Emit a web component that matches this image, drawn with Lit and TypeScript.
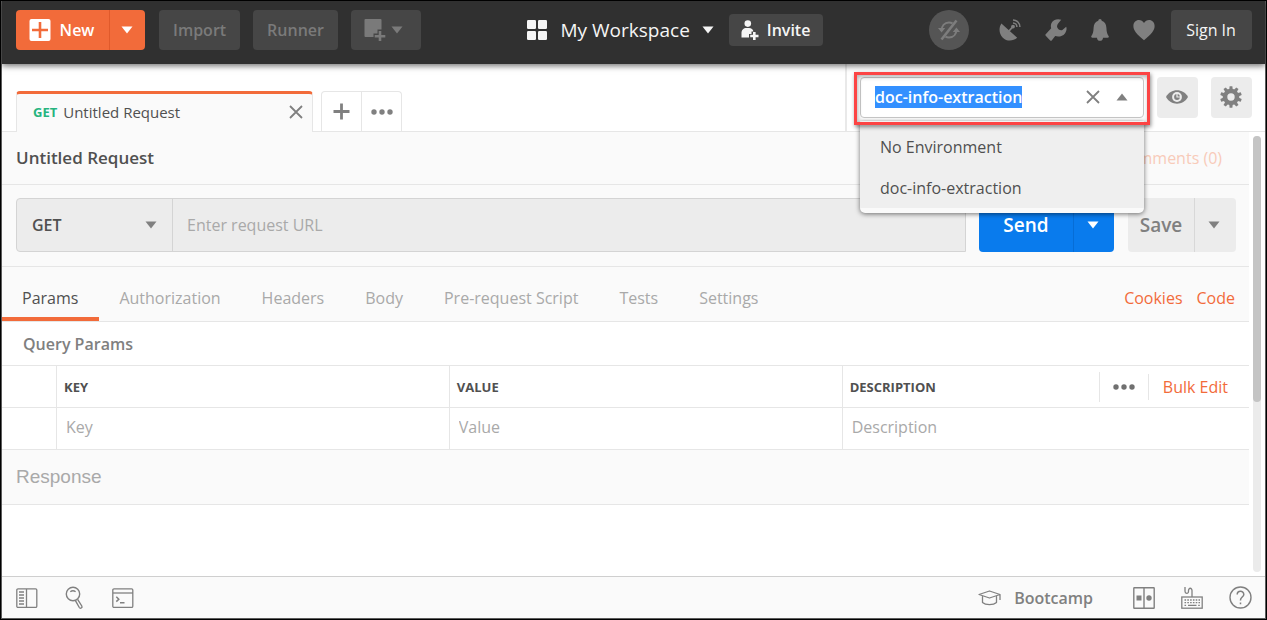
import { LitElement, html, css, svg } from "lit";
import { customElement, property, query, state } from "lit/decorators.js";
import { classMap } from "lit/directives/class-map.js";

const caret = (direction: "down" | "up" = "down") => html`
  <svg class="caret" width="12" height="8" viewBox="0 0 12 8" aria-hidden="true">
    <path d=${direction === "down" ? "M0.5 0.5h11L6 7.5z" : "M0.5 7.5h11L6 0.5z"} fill="currentColor" />
  </svg>
`;

const dots = html`
  <svg width="22" height="6" viewBox="0 0 22 6" aria-hidden="true" fill="currentColor">
    <circle cx="3" cy="3" r="2.7" /><circle cx="11" cy="3" r="2.7" /><circle cx="19" cy="3" r="2.7" />
  </svg>
`;

const cross = html`
  <svg width="14" height="14" viewBox="0 0 14 14" aria-hidden="true">
    <path d="M1 1l12 12M13 1L1 13" stroke="currentColor" stroke-width="1.8" fill="none" />
  </svg>
`;

const gearTeeth = [0, 36, 72, 108, 144, 180, 216, 252, 288, 324].map(
  (angle) => svg`<path d="M9.2 4.4L9.6 0.2h2.8l.4 4.2z" transform="rotate(${angle} 11 11)" />`
);

const icons = {
  newItem: html`
    <svg width="22" height="22" viewBox="0 0 22 22" aria-hidden="true">
      <rect x="0.5" width="21" height="22" rx="2" fill="#fff" />
      <path d="M11 3v16M3 11h16" stroke="#f26b3a" stroke-width="2.6" />
    </svg>
  `,
  newWindow: html`
    <svg width="22" height="22" viewBox="0 0 22 22" aria-hidden="true" fill="currentColor">
      <path d="M1.5 0h15a1 1 0 0 1 1 1v9.500h-4v4H9.500V18H1.500a1 1 0 0 1-1-1V1a1 1 0 0 1 1-1z" />
      <path d="M14.700 12h2.600v4h4v2.600h-4v3.400h-2.600v-3.400h-4V16h4z" />
    </svg>
  `,
  workspace: html`
    <svg width="20" height="20" viewBox="0 0 20 20" aria-hidden="true" fill="currentColor">
      <rect width="9" height="9" rx="1.2" /><rect x="11" width="9" height="9" rx="1.2" />
      <rect y="11" width="9" height="9" rx="1.2" /><rect x="11" y="11" width="9" height="9" rx="1.2" />
    </svg>
  `,
  invite: html`
    <svg width="18" height="20" viewBox="0 0 18 20" aria-hidden="true" fill="currentColor">
      <circle cx="6.800" cy="3.600" r="3.300" />
      <path d="M0.500 17.500v-4.500c0-3 2-5 5-5h2.500c2.500 0 4 1.300 4.400 3.500H10.500v2.500H8v3.500z" />
      <path d="M12 12h2.600v2.700h2.900v2.600h-2.900V20H12v-2.700H9.200v-2.600H12z" />
    </svg>
  `,
  sync: html`
    <svg width="24" height="24" viewBox="0 0 24 24" aria-hidden="true" fill="none" stroke="currentColor" stroke-width="2">
      <path d="M4.500 13c0-5 3-8.500 7.500-8.500 1.500 0 2.500.3 3.500.9M19.500 11c0 5-3 8.500-7.500 8.500-1.500 0-2.500-.3-3.500-.9" />
      <path d="M1 10h7.200l-3.600 4.600zM15.800 14H23l-3.600-4.600z" fill="currentColor" stroke="none" />
      <path d="M19.500 2.500l-15 19" stroke-width="2.600" />
    </svg>
  `,
  satellite: html`
    <svg width="22" height="22" viewBox="0 0 22 22" aria-hidden="true">
      <path d="M2.400 4.500C-.5 9 0 15 3.800 18.700c4 4 10.200 3.700 14.400.1z" fill="currentColor" />
      <path d="M10 12l4-4.500" stroke="currentColor" stroke-width="1.800" />
      <circle cx="14" cy="7.600" r="1.900" fill="currentColor" />
      <path d="M14 3.900a4 4 0 0 1 3.900 4M14 .9a7 7 0 0 1 6.900 7" fill="none" stroke="currentColor" stroke-width="1.500" />
    </svg>
  `,
  wrench: html`
    <svg width="22" height="22" viewBox="0 0 22 22" aria-hidden="true">
      <path d="M16.200 0.700C12.500-.7 8 .6 6.400 4.200c-.7 1.700-.7 3.400-.2 5L.7 15.300a1 1 0 0 0 0 1.400l4.500 4.700a1 1 0 0 0 1.500 0l3.500-4.300c3.500 1.100 7.500.2 9.700-2.700 1.700-2.200 2-4.700 1.300-6.600l-3.800 3.300c-2 .7-4.500-.5-5.100-2.500-.6-1.700-.1-3 1-4.300z" fill="currentColor" />
    </svg>
  `,
  bell: html`
    <svg width="18" height="22" viewBox="0 0 18 22" aria-hidden="true">
      <path d="M9 0c1 0 1.600.7 1.700 1.800 3 .8 4.500 3.400 4.700 6.900.2 4.400.8 6.500 2.200 8.300.5.800.2 1.700-.8 1.700H12c0 2-1.200 3.100-3 3.100s-3-1.100-3-3.100H1.200c-1 0-1.300-.9-.8-1.700 1.400-1.800 2-3.900 2.200-8.300.2-3.500 1.700-6.100 4.700-6.900C7.400.7 8 0 9 0z" fill="currentColor" />
    </svg>
  `,
  heart: html`
    <svg width="22" height="22" viewBox="0 0 22 22" aria-hidden="true">
      <path d="M11 4C9.800 2 8 1 6 1 2.800 1 .4 3.500.4 7c0 4.500 3.100 8 10.600 14.300C18.500 15 21.600 11.500 21.600 7c0-3.500-2.400-6-5.600-6-2 0-3.800 1-5 3z" fill="currentColor" />
    </svg>
  `,
  plus: html`
    <svg width="17" height="17" viewBox="0 0 17 17" aria-hidden="true">
      <path d="M8.500 0.500v16M0.500 8.500h16" stroke="currentColor" stroke-width="2.800" />
    </svg>
  `,
  eye: html`
    <svg width="22" height="14" viewBox="0 0 22 14" aria-hidden="true">
      <path d="M0 7C2.500 2.500 6.500.3 11 .3S19.500 2.500 22 7c-2.500 4.500-6.500 6.700-11 6.700S2.500 11.500 0 7z" fill="currentColor" />
      <circle cx="11" cy="7" r="4.900" fill="#ececec" />
      <circle cx="11" cy="7" r="2.900" fill="currentColor" />
      <path d="M11 4v3h3" stroke="#ececec" stroke-width="1.200" fill="none" />
    </svg>
  `,
  gear: html`
    <svg width="22" height="22" viewBox="0 0 22 22" aria-hidden="true" fill="currentColor">
      ${gearTeeth}
      <circle cx="11" cy="11" r="6" fill="none" stroke="currentColor" stroke-width="4.600" />
    </svg>
  `,
  sidebar: html`
    <svg width="22" height="22" viewBox="0 0 22 22" aria-hidden="true" fill="none" stroke="currentColor" stroke-width="1.300">
      <rect x="0.800" y="1.800" width="20" height="18.600" rx="1.200" />
      <path d="M10.500 2v18M3 5h5M3 8h5M3 11h5M3 14h5M3 17h5" />
    </svg>
  `,
  search: html`
    <svg width="22" height="24" viewBox="0 0 22 24" aria-hidden="true" fill="none" stroke="currentColor" stroke-width="1.400">
      <circle cx="9" cy="8" r="6.700" />
      <path d="M6.300 5.800c1.500-1.300 3.800-1.300 5.300 0" />
      <path d="M11.300 14.300l4 7.200c.5.800 1.300.9 2 .5.700-.4.900-1.200.5-2l-4.200-6.700" stroke-linejoin="round" />
    </svg>
  `,
  console: html`
    <svg width="22" height="22" viewBox="0 0 22 22" aria-hidden="true" fill="none" stroke="currentColor" stroke-width="1.300">
      <rect x="0.800" y="1.800" width="20" height="18.600" rx="1.200" />
      <path d="M1 6h20" />
      <path d="M4.300 9.800l2.500 2.400-2.500 2.400M8 15.800h4.500" stroke-width="1.500" />
    </svg>
  `,
  bootcamp: html`
    <svg width="23" height="16" viewBox="0 0 23 16" aria-hidden="true" fill="none" stroke="currentColor" stroke-width="1.300" stroke-linejoin="round">
      <path d="M11.500 1L22 4.500 11.500 8 1 4.500zM4.500 6v6.500c3 2.800 11 2.800 14 0V6M22 4.500V10" />
    </svg>
  `,
  panes: html`
    <svg width="22" height="22" viewBox="0 0 22 22" aria-hidden="true" fill="none" stroke="currentColor" stroke-width="1.400">
      <rect x="0.800" y="0.800" width="20.400" height="20.400" rx="0.500" /><path d="M11 1v20" />
      <rect x="3.500" y="8.500" width="5" height="5" fill="currentColor" stroke="none" />
      <circle cx="16" cy="11" r="2.700" fill="currentColor" stroke="none" />
    </svg>
  `,
  keyboard: html`
    <svg width="22" height="23" viewBox="0 0 22 23" aria-hidden="true" fill="none" stroke="currentColor" stroke-width="1.300">
      <rect x="0.800" y="11" width="20.400" height="11.200" />
      <path d="M11 11V4.500c0-3-3.500-3-3.500 0v.8c0 2.800-3.500 2.600-3.500 0V1" />
      <path d="M3.500 14h15.500M3.500 16.700h15.500" stroke-dasharray="1.600 1.200" />
      <path d="M3.500 19.400h1.600M7 19.400h8.500M17.200 19.400h1.600" />
    </svg>
  `,
  help: html`
    <svg width="23" height="23" viewBox="0 0 23 23" aria-hidden="true" fill="none" stroke="currentColor" stroke-width="1.400">
      <circle cx="11.500" cy="11.500" r="10.500" />
      <path d="M8.200 8.600c0-4.300 6.600-4.300 6.600-.2 0 2.600-3.300 2.700-3.300 5.600v.6M11.500 16.500v1.800" stroke-width="1.500" />
    </svg>
  `,
};

@customElement("environment-picker")
export class EnvironmentPicker extends LitElement {
  @property({ type: Array }) options: string[] = [];
  @property() value = "";
  @query("input") private field!: HTMLInputElement;

  static styles = css`
    :host {
      position: relative;
      z-index: 5;
      display: block;
      width: 284px;
      font: 16px/22px "Open Sans", sans-serif;
      color: #505050;
    }
    .field {
      display: flex;
      align-items: center;
      gap: 9px;
      box-sizing: border-box;
      height: 41px;
      padding: 0 11px 2px 14px;
      border: 1px solid #c8c8c8;
      border-radius: 4px;
      background: #fff;
      color: #808080;
    }
    .field::after {
      content: "";
      position: absolute;
      inset: -5px -6px -7px;
      z-index: 2;
      border: 3px solid #fc4444;
      box-shadow: 1px 2px 4px rgba(0, 0, 0, 0.45), inset 1px 2px 4px rgba(0, 0, 0, 0.3);
      pointer-events: none;
    }
    input {
      flex: 1;
      min-width: 0;
      padding: 0;
      border: 0;
      outline: 0;
      background: none;
      font: inherit;
      font-weight: 600;
      color: #505050;
    }
    input::selection {
      background: #3390ff;
      color: #fff;
    }
    button {
      display: grid;
      place-items: center;
      width: 20px;
      height: 30px;
      padding: 0;
      border: 0;
      background: none;
      color: inherit;
    }
    .menu {
      position: absolute;
      z-index: 1;
      top: 44px;
      left: 0;
      right: 0;
      margin: 0;
      padding: 5px 0;
      border-radius: 0 0 5px 5px;
      background: #fafafa;
      box-shadow: 0 1px 5px rgba(0, 0, 0, 0.55);
      list-style: none;
    }
    .option {
      padding: 10px 20px 9px;
      background: #efefef;
    }
  `;

  firstUpdated() {
    this.field.focus();
    this.field.select();
  }

  private clear() {
    this.value = "";
  }

  render() {
    return html`
      <div class="field">
        <input type="text" role="combobox" aria-label="Environment" aria-expanded="true" aria-controls="environments"
          spellcheck="false" .value=${this.value} />
        <button type="button" aria-label="Clear environment" @click=${this.clear}>${cross}</button>
        <button type="button" aria-label="Toggle list">${caret("up")}</button>
      </div>
      <ul class="menu" id="environments" role="listbox" aria-label="Environments">
        ${this.options.map((name) => html`<li class="option" role="option">${name}</li>`)}
      </ul>
    `;
  }
}

@customElement("app-root")
export class AppRoot extends LitElement {
  @state() private section = "Params";

  private sections = ["Params", "Authorization", "Headers", "Body", "Pre-request Script", "Tests", "Settings"];

  static styles = css`
    :host {
      display: flex;
      flex-direction: column;
      box-sizing: border-box;
      height: 100vh;
      border: 1px solid #000;
      background: #fff;
      font: 16px/22px "Open Sans", sans-serif;
      color: #505050;
    }
    svg {
      display: block;
      flex: none;
    }
    button {
      display: flex;
      align-items: center;
      justify-content: center;
      padding: 0;
      border: 0;
      background: none;
      font: inherit;
      color: inherit;
    }
    a {
      color: #f26b3a;
      text-decoration: none;
    }
    .window {
      display: flex;
      flex: 1;
      flex-direction: column;
      min-height: 0;
      border: 1px solid #5c5c5c;
      border-top: 0;
    }

    .topbar {
      position: relative;
      z-index: 2;
      display: flex;
      align-items: center;
      justify-content: space-between;
      height: 63px;
      padding: 0 13px 5px 14px;
      box-sizing: border-box;
      background: #303030;
      box-shadow: 0 2px 6px rgba(0, 0, 0, 0.55);
      color: #f5f5f5;
    }
    .group {
      display: flex;
      align-items: center;
    }
    .actions {
      gap: 13px;
    }
    .topbar .btn {
      height: 40px;
      padding: 0 14px;
      border-radius: 4px;
      background: #464646;
    }
    .topbar .dim {
      color: #7a7a7a;
      font-weight: 600;
    }
    .topbar .window-btn {
      gap: 5px;
      padding: 0 18px 0 13px;
    }
    .topbar .sign-in {
      padding: 0 15px 0 14px;
      min-width: 81px;
    }
    .split {
      display: flex;
      border-radius: 4px;
      overflow: hidden;
    }
    .new {
      margin-right: 1px;
      background: #f26b3a;
      color: #fff;
      font-weight: 600;
    }
    .new .new-main {
      gap: 9px;
      box-sizing: border-box;
      width: 93px;
      height: 40px;
      padding-right: 2px;
    }
    .new .new-more {
      width: 36px;
      box-sizing: border-box;
      padding-right: 1px;
      border-left: 1px solid #e05a2b;
    }
    .center {
      gap: 15px;
    }
    .workspace {
      gap: 12px;
      font-size: 19px;
      line-height: 26px;
    }
    .workspace-name {
      margin-left: 2px;
    }
    .topbar .invite {
      gap: 8px;
      height: 32px;
      padding: 0 13px 0 12px;
      font-weight: 600;
    }
    .sync {
      width: 40px;
      height: 40px;
      margin-right: 30px;
      border-radius: 50%;
      background: #555;
      color: #7d7d7d;
    }
    .tools {
      display: flex;
      align-items: center;
      gap: 24px;
      margin-right: 16px;
      color: #808080;
    }

    .tabbar {
      display: flex;
      height: 67px;
      border-bottom: 1px solid #e6e6e6;
    }
    .tabs {
      display: flex;
      flex: 1;
      align-items: flex-end;
      gap: 8px;
      padding-left: 14px;
    }
    .tab {
      display: flex;
      align-items: center;
      box-sizing: border-box;
      width: 297px;
      height: 41px;
      margin-bottom: -1px;
      padding: 0 9px 2px 16px;
      border: 1px solid #e6e6e6;
      border-top: 3px solid #f26b3a;
      border-bottom: 0;
      border-radius: 4px 4px 0 0;
      background: #fafafa;
      font-size: 15px;
    }
    .verb {
      margin-right: 6px;
      color: #26b47f;
      font-size: 13px;
      font-weight: 700;
    }
    .tab-name {
      flex: 1;
    }
    .tab-tools {
      display: flex;
      border: 1px solid #e6e6e6;
      border-bottom: 0;
      border-radius: 4px 4px 0 0;
      color: #808080;
    }
    .tab-tools button {
      box-sizing: border-box;
      width: 39px;
      height: 39px;
    }
    .tab-tools button + button {
      width: 40px;
      border-left: 1px solid #e6e6e6;
    }
    .close {
      color: #808080;
    }
    .environment {
      display: flex;
      align-items: center;
      gap: 13px;
      padding: 0 13px;
      border-left: 2px solid #e9e9e9;
    }
    .square {
      box-sizing: border-box;
      width: 41px;
      height: 41px;
      padding: 0 1px 1px 0;
      border-radius: 4px;
      background: #ececec;
      color: #808080;
    }

    .body {
      display: flex;
      flex: 1;
      min-height: 0;
    }
    .content {
      flex: 1;
      min-width: 0;
    }
    .scrollbar {
      width: 8px;
      margin: 4px;
      border-radius: 4px;
      background: #ebebeb;
    }
    .thumb {
      height: 61%;
      border-radius: 4px;
      background: #c4c4c4;
    }
    .request-head,
    .url-row,
    .sections,
    .response {
      border-bottom: 1px solid #e6e6e6;
      background: #fafafa;
    }
    .request-head {
      display: flex;
      align-items: center;
      justify-content: space-between;
      height: 52px;
      padding: 0 27px 0 14px;
    }
    h1 {
      margin: 0;
      font-size: 17px;
      line-height: 24px;
      font-weight: 600;
    }
    .comments {
      color: #f8cbb9;
    }
    .url-row {
      display: flex;
      padding: 13px 13px 14px 14px;
    }
    .url-box {
      display: flex;
      flex: 1;
      box-sizing: border-box;
      height: 54px;
      margin-right: 13px;
      border: 1px solid #d4d4d4;
      border-radius: 4px 0 0 4px;
      background: #ececec;
    }
    .method {
      display: grid;
      align-items: center;
      width: 155px;
      border-right: 1px solid #d4d4d4;
      color: #808080;
    }
    .method select,
    .method svg {
      grid-area: 1 / 1;
    }
    .method svg {
      justify-self: end;
      margin-right: 15px;
      pointer-events: none;
    }
    select {
      height: 52px;
      padding: 0 15px;
      border: 0;
      appearance: none;
      background: none;
      font: inherit;
      font-weight: 600;
      color: #505050;
    }
    .url-box input {
      flex: 1;
      min-width: 0;
      padding: 0 14px;
    }
    input {
      border: 0;
      background: none;
      font: inherit;
      color: #505050;
    }
    input::placeholder {
      color: #a9a9a9;
      opacity: 1;
    }
    .big {
      box-sizing: border-box;
      height: 54px;
      font-size: 19px;
      font-weight: 600;
    }
    .send {
      margin-right: 14px;
      background: #097bed;
      color: #fff;
    }
    .send-main {
      width: 94px;
    }
    .send-more {
      width: 41px;
      padding-right: 3px;
      border-left: 1px solid #066dd6;
    }
    .save {
      background: #ececec;
      color: #808080;
    }
    .save-main {
      width: 66px;
    }
    .save-more {
      width: 42px;
      padding-right: 3px;
      border-left: 1px solid #d8d8d8;
    }

    .sections {
      display: flex;
      justify-content: space-between;
      height: 54px;
      padding-right: 14px;
    }
    .section {
      box-sizing: border-box;
      height: 54px;
      padding: 12px 21px 0 20px;
      border-bottom: 4px solid transparent;
      color: #a9a9a9;
    }
    .section.active {
      border-color: #f26b3a;
      color: #505050;
    }
    .links {
      display: flex;
      align-items: center;
      gap: 14px;
      padding-top: 8px;
    }
    h2 {
      margin: 0;
      padding: 11px 21px 10px;
      font-size: 16px;
      line-height: 22px;
      font-weight: 600;
      color: #808080;
    }
    table {
      width: 100%;
      border-collapse: collapse;
      table-layout: fixed;
    }
    tr {
      height: 42px;
    }
    th,
    td {
      padding: 0 7px;
      border: 1px solid #e6e6e6;
      border-width: 1px 0 1px 1px;
      text-align: left;
    }
    td {
      padding-bottom: 3px;
    }
    th {
      font-size: 13px;
      font-weight: 700;
    }
    th:first-child,
    td:first-child {
      border-left: 0;
    }
    .check {
      width: 40px;
    }
    .wide {
      width: 30.3%;
    }
    td input {
      box-sizing: border-box;
      width: 100%;
      padding: 0 2px;
    }
    .last {
      display: flex;
      align-items: center;
      justify-content: space-between;
    }
    .last-tools {
      display: flex;
      align-items: center;
      padding-right: 14px;
      color: #707070;
      font-size: 16px;
      font-weight: 400;
    }
    .last-tools button {
      width: 49px;
      height: 30px;
      border-left: 1px solid #e6e6e6;
    }
    .last-tools a {
      padding: 2px 0 2px 14px;
      border-left: 1px solid #e6e6e6;
    }
    .response {
      padding: 15px 14px;
      color: #a9a9a9;
      font: 19px/24px "Liberation Sans", sans-serif;
    }

    .status {
      display: flex;
      align-items: center;
      justify-content: space-between;
      height: 41px;
      padding: 0 13px 0 14px;
      border-top: 1px solid #cfcfcf;
      background: #fafafa;
      color: #808080;
    }
    .status-group {
      display: flex;
      align-items: center;
      gap: 26px;
    }
    .bootcamp {
      gap: 13px;
      margin-right: 14px;
      font-weight: 600;
    }
  `;

  private renderTopbar() {
    return html`
      <header class="topbar">
        <div class="group actions">
          <div class="split new">
            <button class="new-main" type="button">${icons.newItem}<span>New</span></button>
            <button class="new-more" type="button" aria-label="More new items">${caret()}</button>
          </div>
          <button class="btn dim" type="button">Import</button>
          <button class="btn dim" type="button">Runner</button>
          <button class="btn dim window-btn" type="button" aria-label="Open new window">${icons.newWindow}${caret()}</button>
        </div>
        <div class="group center">
          <button class="workspace" type="button">
            ${icons.workspace}<span class="workspace-name">My Workspace</span>${caret()}
          </button>
          <button class="btn invite" type="button">${icons.invite}<span>Invite</span></button>
        </div>
        <div class="group">
          <button class="sync" type="button" aria-label="Sync is off">${icons.sync}</button>
          <div class="tools">
            <button type="button" aria-label="Capture requests">${icons.satellite}</button>
            <button type="button" aria-label="Settings">${icons.wrench}</button>
            <button type="button" aria-label="Notifications">${icons.bell}</button>
            <button type="button" aria-label="Favourites">${icons.heart}</button>
          </div>
          <button class="btn sign-in" type="button">Sign In</button>
        </div>
      </header>
    `;
  }

  private renderTabbar() {
    return html`
      <div class="tabbar">
        <div class="tabs">
          <div class="tab">
            <span class="verb">GET</span><span class="tab-name">Untitled Request</span>
            <button class="close" type="button" aria-label="Close tab">${cross}</button>
          </div>
          <div class="tab-tools">
            <button type="button" aria-label="New tab">${icons.plus}</button>
            <button type="button" aria-label="Tab options">${dots}</button>
          </div>
        </div>
        <div class="environment">
          <environment-picker .options=${["No Environment", "doc-info-extraction"]} value="doc-info-extraction"></environment-picker>
          <button class="square" type="button" aria-label="Environment quick look">${icons.eye}</button>
          <button class="square" type="button" aria-label="Manage environments">${icons.gear}</button>
        </div>
      </div>
    `;
  }

  private renderRequest() {
    return html`
      <div class="request-head">
        <h1>Untitled Request</h1>
        <a class="comments" href="#comments">Comments (0)</a>
      </div>
      <div class="url-row">
        <div class="url-box">
          <div class="method">
            <select aria-label="Request method"><option>GET</option></select>
            ${caret()}
          </div>
          <input type="text" aria-label="Request URL" placeholder="Enter request URL" />
        </div>
        <div class="split send">
          <button class="big send-main" type="button">Send</button>
          <button class="big send-more" type="button" aria-label="Send options">${caret()}</button>
        </div>
        <div class="split save">
          <button class="big save-main" type="button">Save</button>
          <button class="big save-more" type="button" aria-label="Save options">${caret()}</button>
        </div>
      </div>
      <div class="sections">
        <nav class="group">
          ${this.sections.map(
            (name) => html`
              <button type="button" class=${classMap({ section: true, active: name === this.section })}
                @click=${() => (this.section = name)}>${name}</button>
            `
          )}
        </nav>
        <div class="links"><a href="#cookies">Cookies</a><a href="#code">Code</a></div>
      </div>
    `;
  }

  private renderParams() {
    return html`
      <h2>Query Params</h2>
      <table>
        <thead>
          <tr>
            <th class="check"></th>
            <th class="wide">KEY</th>
            <th class="wide">VALUE</th>
            <th>
              <div class="last">
                <span>DESCRIPTION</span>
                <div class="last-tools">
                  <button type="button" aria-label="Column options">${dots}</button>
                  <a href="#bulk">Bulk Edit</a>
                </div>
              </div>
            </th>
          </tr>
        </thead>
        <tbody>
          <tr>
            <td></td>
            <td><input type="text" aria-label="Key" placeholder="Key" /></td>
            <td><input type="text" aria-label="Value" placeholder="Value" /></td>
            <td><input type="text" aria-label="Description" placeholder="Description" /></td>
          </tr>
        </tbody>
      </table>
      <div class="response">Response</div>
    `;
  }

  private renderStatus() {
    return html`
      <footer class="status">
        <div class="status-group">
          <button type="button" aria-label="Toggle sidebar">${icons.sidebar}</button>
          <button type="button" aria-label="Find">${icons.search}</button>
          <button type="button" aria-label="Console">${icons.console}</button>
        </div>
        <div class="status-group">
          <button class="bootcamp" type="button">${icons.bootcamp}<span>Bootcamp</span></button>
          <button type="button" aria-label="Two-pane view">${icons.panes}</button>
          <button type="button" aria-label="Keyboard shortcuts">${icons.keyboard}</button>
          <button type="button" aria-label="Help">${icons.help}</button>
        </div>
      </footer>
    `;
  }

  render() {
    return html`
      <div class="window">
        ${this.renderTopbar()} ${this.renderTabbar()}
        <div class="body">
          <main class="content">${this.renderRequest()} ${this.renderParams()}</main>
          <div class="scrollbar"><div class="thumb"></div></div>
        </div>
        ${this.renderStatus()}
      </div>
    `;
  }
}
